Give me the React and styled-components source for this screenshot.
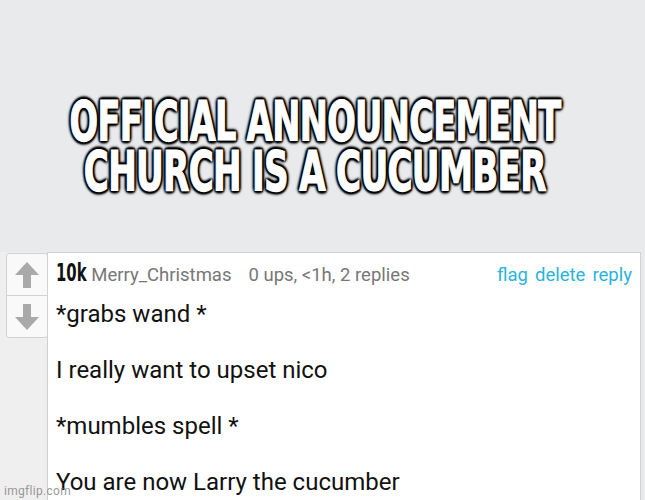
import React from "react";
import styled, { createGlobalStyle } from "styled-components";

const GlobalStyle = createGlobalStyle`
  html, body {
    margin: 0;
    padding: 0;
    background-color: #e9eaec;
  }
`;

const Page = styled.div`
  position: relative;
  display: flex;
  flex-direction: column;
  width: 645px;
  height: 500px;
  overflow: hidden;
  background-color: #e9eaec;
  font-family: Roboto, "Liberation Sans", sans-serif;
`;

const Banner = styled.div`
  display: flex;
  flex-direction: column;
  align-items: center;
  flex-shrink: 0;
  height: 252px;
  box-sizing: border-box;
  padding: 96px 15px 0 0;
`;

// Heavy white caption with a dark blurred outline
const MemeLine = styled.div`
  font-family: "DejaVu Sans Condensed", "DejaVu Sans", sans-serif;
  font-weight: 700;
  font-size: 55px;
  line-height: 50px;
  letter-spacing: -1px;
  color: #fff;
  -webkit-text-stroke: 1.2px #fff;
  text-shadow:
    2px 2px 2px #000,
    -2px -2px 2px #000,
    2px -2px 2px #000,
    -2px 2px 2px #000,
    0 3px 3px #000,
    0 -3px 3px #000,
    3px 0 3px #000,
    -3px 0 3px #000;
  white-space: nowrap;
  transform: scaleX(${(p) => p.$squeeze});
`;

const Comment = styled.div`
  display: flex;
  flex: 1;
  min-height: 0;
  margin-right: 4px;
`;

const VoteColumn = styled.div`
  flex-shrink: 0;
  width: 48px;
  padding: 1px 0 0 6px;
  box-sizing: border-box;
  background-color: #efefef;
  border-right: 1px solid #cfcfcf;
`;

const VoteBox = styled.div`
  display: flex;
  flex-direction: column;
  width: 40px;
  border: 1px solid #d2d2d2;
  border-radius: 3px;
  background-color: #f9f9f9;
`;

const VoteButton = styled.div`
  display: flex;
  justify-content: center;
  align-items: center;
  height: 41px;
  border-top: ${(p) => (p.$divider ? "1px solid #d2d2d2" : "none")};
`;

const Content = styled.div`
  flex: 1;
  min-width: 0;
  padding: 5px 8px 0 8px;
  background-color: #fff;
  border-top: 1px solid #d2d2d2;
  border-right: 1px solid #d2d2d2;
`;

const Header = styled.div`
  display: flex;
  align-items: baseline;
  height: 30px;
  line-height: 30px;
  white-space: nowrap;
`;

const Points = styled.span`
  display: inline-block;
  font-family: "DejaVu Sans Condensed", "DejaVu Sans", sans-serif;
  font-weight: 700;
  font-size: 25px;
  color: #111;
  transform: scaleX(0.66);
  transform-origin: left center;
  margin-right: -11px;
`;

const Meta = styled.span`
  font-size: 18.5px;
  color: #777;
  margin-right: ${(p) => p.$gap || 0}px;
`;

const Actions = styled.div`
  display: flex;
  gap: 7px;
  margin-left: auto;
`;

const Action = styled.span`
  font-size: 18.5px;
  color: #2ab4dc;
`;

const Body = styled.div`
  padding-top: 9px;
`;

const Para = styled.p`
  margin: 0 0 22px 0;
  font-size: 24px;
  line-height: 34px;
  color: #111;
  white-space: nowrap;
`;

const Watermark = styled.div`
  position: absolute;
  left: 4px;
  bottom: 2px;
  font-size: 12px;
  color: rgba(120, 120, 120, 0.75);
  letter-spacing: 0.3px;
`;

const ArrowUp = () => (
  <svg width="26" height="28" viewBox="0 0 26 28">
    <path d="M13 1 L25 14 L17 14 L17 27 L9 27 L9 14 L1 14 Z" fill="#a9a9a9" />
  </svg>
);

const ArrowDown = () => (
  <svg width="26" height="28" viewBox="0 0 26 28">
    <path d="M9 1 L17 1 L17 14 L25 14 L13 27 L1 14 L9 14 Z" fill="#a9a9a9" />
  </svg>
);

const App = () => {
  return (
    <>
      <GlobalStyle />
      <Page>
        <Banner>
          <MemeLine $squeeze={0.68}>OFFICIAL ANNOUNCEMENT</MemeLine>
          <MemeLine $squeeze={0.69}>CHURCH IS A CUCUMBER</MemeLine>
        </Banner>
        <Comment>
          <VoteColumn>
            <VoteBox>
              <VoteButton>
                <ArrowUp />
              </VoteButton>
              <VoteButton $divider>
                <ArrowDown />
              </VoteButton>
            </VoteBox>
          </VoteColumn>
          <Content>
            <Header>
              <Points>10k</Points>
              <Meta $gap={17}>Merry_Christmas</Meta>
              <Meta>0 ups, &lt;1h, 2 replies</Meta>
              <Actions>
                <Action>flag</Action>
                <Action>delete</Action>
                <Action>reply</Action>
              </Actions>
            </Header>
            <Body>
              <Para>*grabs wand *</Para>
              <Para>I really want to upset nico</Para>
              <Para>*mumbles spell *</Para>
              <Para>You are now Larry the cucumber</Para>
            </Body>
          </Content>
        </Comment>
        <Watermark>imgflip.com</Watermark>
      </Page>
    </>
  );
};

export default App;
